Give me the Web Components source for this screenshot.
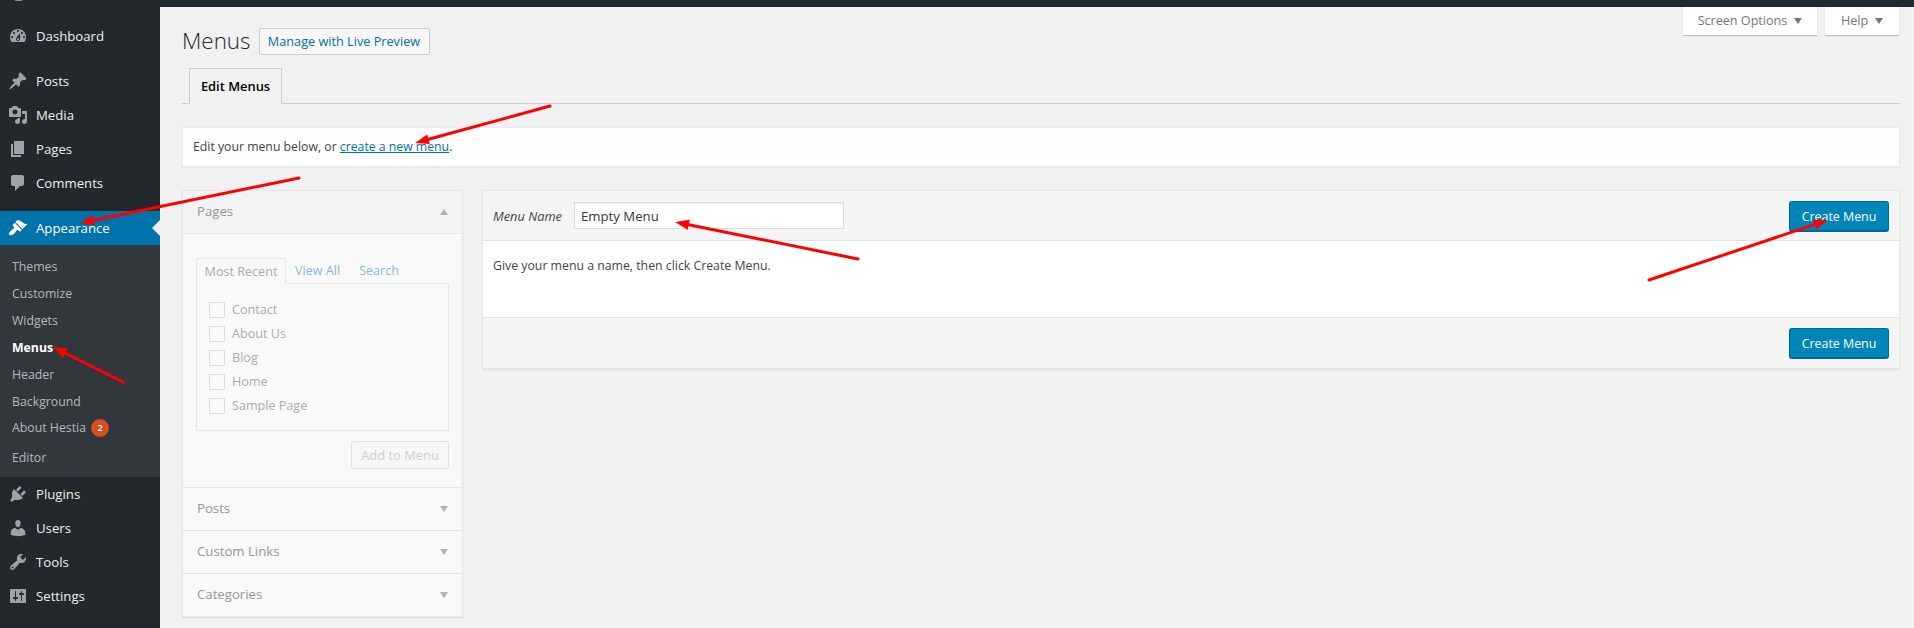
<!DOCTYPE html>
<html lang="en"><head><meta charset="utf-8"><title>Menus</title>
<style>
html,body{margin:0;padding:0;height:628px;overflow:hidden;background:#f1f1f1}
body{font:13px/1.4 "Open Sans","Noto Sans",sans-serif;color:#444;position:relative}
</style></head><body>
<wp-shell>
  <wp-sidebar slot="side">
    <wp-menu-item icon="dashboard" label="Dashboard" style="margin-bottom:11px"></wp-menu-item>
    <wp-menu-item icon="post" label="Posts"></wp-menu-item>
    <wp-menu-item icon="media" label="Media"></wp-menu-item>
    <wp-menu-item icon="page" label="Pages"></wp-menu-item>
    <wp-menu-item icon="comments" label="Comments" style="margin-bottom:11px"></wp-menu-item>
    <wp-menu-item icon="appearance" label="Appearance" current></wp-menu-item>
    <wp-submenu>
      <wp-sub-item>Themes</wp-sub-item>
      <wp-sub-item>Customize</wp-sub-item>
      <wp-sub-item>Widgets</wp-sub-item>
      <wp-sub-item current>Menus</wp-sub-item>
      <wp-sub-item>Header</wp-sub-item>
      <wp-sub-item>Background</wp-sub-item>
      <wp-sub-item tall badge="2">About Hestia</wp-sub-item>
      <wp-sub-item>Editor</wp-sub-item>
    </wp-submenu>
    <wp-menu-item icon="plugin" label="Plugins"></wp-menu-item>
    <wp-menu-item icon="users" label="Users"></wp-menu-item>
    <wp-menu-item icon="tools" label="Tools"></wp-menu-item>
    <wp-menu-item icon="settings" label="Settings"></wp-menu-item>
  </wp-sidebar>
  <wp-content slot="main">
    <wp-screen-tabs></wp-screen-tabs>
    <wp-heading></wp-heading>
    <wp-notice></wp-notice>
    <wp-columns>
      <wp-metaboxes slot="left">
        <wp-accordion title="Pages" open>
          <wp-pages-panel></wp-pages-panel>
        </wp-accordion>
        <wp-accordion title="Posts"></wp-accordion>
        <wp-accordion title="Custom Links"></wp-accordion>
        <wp-accordion title="Categories"></wp-accordion>
      </wp-metaboxes>
      <wp-menu-editor slot="right"></wp-menu-editor>
    </wp-columns>
  </wp-content>
  <wp-arrows slot="over"></wp-arrows>
</wp-shell>
<script>
const ICONS={
dashboard:"M3.76 16h12.48c1.1-1.37 1.76-3.11 1.76-5 0-4.42-3.58-8-8-8s-8 3.58-8 8c0 1.89.66 3.63 1.76 5zM10 4c.55 0 1 .45 1 1s-.45 1-1 1-1-.45-1-1 .45-1 1-1zM6 6c.55 0 1 .45 1 1s-.45 1-1 1-1-.45-1-1 .45-1 1-1zm8 0c.55 0 1 .45 1 1s-.45 1-1 1-1-.45-1-1 .45-1 1-1zm-5.37 5.55L12 7v6c0 1.1-.9 2-2 2s-2-.9-2-2c0-.57.24-1.08.63-1.45zM4 10c.55 0 1 .45 1 1s-.45 1-1 1-1-.45-1-1 .45-1 1-1zm12 0c.55 0 1 .45 1 1s-.45 1-1 1-1-.45-1-1 .45-1 1-1zm-5 3c0-.55-.45-1-1-1s-1 .45-1 1 .45 1 1 1 1-.45 1-1z",
post:"M10.44 3.02l1.82-1.82 6.36 6.35-1.83 1.82c-1.05-.68-2.48-.57-3.41.36l-.75.75c-.92.93-1.04 2.35-.35 3.41l-1.83 1.82-2.41-2.41-2.8 2.79c-.42.42-3.38 2.71-3.8 2.29s1.86-3.39 2.28-3.81l2.79-2.79L4.1 9.36l1.83-1.82c1.05.69 2.48.57 3.4-.36l.75-.75c.93-.92 1.05-2.35.36-3.41z",
media:"M13 11V4c0-.55-.45-1-1-1h-1.67L9 1H5L3.67 3H2c-.55 0-1 .45-1 1v7c0 .55.45 1 1 1h10c.55 0 1-.45 1-1zM7 4.5c1.38 0 2.5 1.12 2.5 2.5S8.38 9.5 7 9.5 4.5 8.38 4.5 7 5.62 4.5 7 4.5zM14 6h5v10.5c0 1.38-1.12 2.5-2.5 2.5S14 17.88 14 16.5s1.12-2.5 2.5-2.5c.17 0 .34.02.5.05V9h-3V6zm-4 8.05V13h2v3.5c0 1.38-1.12 2.5-2.5 2.5S7 17.88 7 16.5 8.12 14 9.5 14c.17 0 .34.02.5.05z",
page:"M6 15V2h10v13H6zm-1 1h8v2H3V5h2v11z",
comments:"M5 2h9c1.1 0 2 .9 2 2v7c0 1.1-.9 2-2 2h-2l-5 5v-5H5c-1.1 0-2-.9-2-2V4c0-1.1.9-2 2-2z",
appearance:"M14.48 11.06L7.41 3.99l1.5-1.5c.5-.56 2.3-.47 3.51.32 1.21.8 1.43 1.28 2.91 2.1 1.18.64 2.45 1.26 4.45.85zm-.71.71L6.7 4.7 4.93 6.47c-.39.39-.39 1.02 0 1.41l1.06 1.06c.39.39.39 1.03 0 1.42-.6.6-1.43 1.11-2.21 1.69-.35.26-.7.53-1.01.84C1.43 13.23.26 15.88 1.28 16.9c1.01 1.01 3.68-.16 5.03-1.51.31-.31.58-.66.84-1.01.58-.78 1.09-1.61 1.69-2.21.39-.39 1.02-.39 1.41 0l1.06 1.06c.39.39 1.02.39 1.41 0z",
plugin:"M13.11 4.36L9.87 7.6 8 5.73l3.24-3.24c.35-.34 1.05-.2 1.56.32.52.51.66 1.21.31 1.55zm-8 1.77l.91-1.12 9.01 9.01-1.19.84c-.71.71-2.63 1.16-3.82 1.16H6.14L4.9 17.26c-.59.59-1.54.59-2.12 0-.59-.58-.59-1.53 0-2.12l1.24-1.24v-3.88c0-1.13.4-3.19 1.09-3.89zm7.26 3.97l3.24-3.24c.34-.35 1.04-.21 1.55.31.52.51.66 1.21.31 1.55l-3.24 3.25z",
users:"M10 9.25c-2.27 0-2.73-3.44-2.73-3.44C7 4.02 7.82 2 9.97 2c2.16 0 2.98 2.02 2.71 3.81 0 0-.41 3.44-2.68 3.44zm0 2.57L12.72 10c2.39 0 4.52 2.33 4.52 4.53v2.49s-3.65 1.13-7.24 1.13c-3.65 0-7.24-1.13-7.24-1.13v-2.49c0-2.25 1.94-4.48 4.47-4.48z",
tools:"M16.68 9.77c-1.34 1.34-3.3 1.67-4.95.99l-5.41 6.52c-.99.99-2.59.99-3.58 0s-.99-2.59 0-3.57l6.52-5.42c-.68-1.65-.35-3.61.99-4.95 1.28-1.28 3.12-1.62 4.72-1.06l-2.89 2.89 2.82 2.82 2.86-2.87c.53 1.58.18 3.39-1.08 4.65zM3.81 16.21c.4.39 1.04.39 1.43 0 .4-.4.4-1.04 0-1.43-.39-.4-1.03-.4-1.43 0-.39.39-.39 1.03 0 1.43z",
settings:"M18 16V4c0-.55-.45-1-1-1H3c-.55 0-1 .45-1 1v12c0 .55.45 1 1 1h14c.55 0 1-.45 1-1zM8 11h1c.55 0 1 .45 1 1s-.45 1-1 1H8v1.5c0 .28-.22.5-.5.5s-.5-.22-.5-.5V13H6c-.55 0-1-.45-1-1s.45-1 1-1h1V5.5c0-.28.22-.5.5-.5s.5.22.5.5V11zm5-2h-1c-.55 0-1-.45-1-1s.45-1 1-1h1V5.5c0-.28.22-.5.5-.5s.5.22.5.5V7h1c.55 0 1 .45 1 1s-.45 1-1 1h-1v5.5c0 .28-.22.5-.5.5s-.5-.22-.5-.5V9z"
};
const FONT='"Open Sans","Noto Sans",sans-serif';
function def(name,html){
  customElements.define(name,class extends HTMLElement{
    constructor(){super();this.attachShadow({mode:"open"});}
    connectedCallback(){ this.shadowRoot.innerHTML=typeof html==="function"?html(this):html; }
  });
}
def("wp-shell",`<style>
:host{display:flex;flex-direction:column;width:1914px;height:628px;overflow:hidden;position:relative}
.bar{height:7px;flex:none;background:#23282d;position:relative}
.bar svg{display:block;position:absolute;left:14px;top:0}
.row{display:flex;flex:1;min-height:0}
</style>
<div class="bar"><svg width="10" height="2"><path d="M0 0h9L7 1H2z" fill="#8f9397"/></svg></div>
<div class="row"><slot name="side"></slot><slot name="main"></slot></div>
<slot name="over"></slot>`);
def("wp-sidebar",`<style>
:host{display:block;width:160px;flex:none;background:#23282d;padding-top:12px;box-sizing:border-box}
</style><slot></slot>`);
def("wp-menu-item",el=>{
  const cur=el.hasAttribute("current");
  return `<style>
  :host{display:flex;align-items:center;height:34px;position:relative;font:500 13.2px/18px ${FONT};color:#eee;background:${cur?"#0073aa":"transparent"}}
  svg{width:20px;height:20px;margin:0 8px;flex:none;fill:${cur?"#fff":"#9ea3a8"}}
  span{color:${cur?"#fff":"#eee"}}
  i{position:absolute;right:0;top:9px;border:8px solid transparent;border-right-color:#f1f1f1;border-left:0}
  </style><svg viewBox="0 0 20 20"><path d="${ICONS[el.getAttribute("icon")]}"/></svg><span>${el.getAttribute("label")}</span>${cur?"<i></i>":""}`;
});
def("wp-submenu",`<style>:host{display:block;background:#32373c;padding:8px 0 6px}</style><slot></slot>`);
def("wp-sub-item",el=>{
  const cur=el.hasAttribute("current"),tall=el.hasAttribute("tall"),b=el.getAttribute("badge");
  return `<style>
  :host{display:flex;align-items:center;height:${tall?"29px":"27px"};box-sizing:border-box;padding:${tall?"0 0 3px 12px":"0 0 0 12px"};font:${cur?"700":"400"} 12.3px/18px ${FONT};color:${cur?"#fff":"#b4b9be"}}
  b{display:inline-flex;align-items:center;justify-content:center;width:18px;height:18px;border-radius:50%;background:#d54e21;color:#fff;font:600 9px/18px ${FONT};margin-left:5px}
  </style><slot></slot>${b?`<b>${b}</b>`:""}`;
});
def("wp-content",`<style>:host{display:block;flex:1;min-width:0;padding:0 14px 0 22px;position:relative}</style><slot></slot>`);
def("wp-screen-tabs",`<style>
:host{position:absolute;right:15px;top:0;display:flex;gap:8px;font:400 12.6px/18px ${FONT};color:#72777c}
div{height:28px;box-sizing:border-box;background:#fff;box-shadow:0 1px 1px rgba(0,0,0,.2);display:flex;align-items:center;justify-content:center;gap:7px}
i{width:0;height:0;border:4px solid transparent;border-top:6px solid #72777c;border-bottom:0}
.a{width:134px}.b{width:74px}
</style><div class="a">Screen Options <i></i></div><div class="b">Help <i></i></div>`);
def("wp-heading",`<style>
:host{display:block}
.t{display:flex;align-items:center;height:28px;padding-top:20px}
h1{margin:0;font:300 22.4px/28px ${FONT};color:#23282d}
a{margin-left:8px;width:171px;height:27px;box-sizing:border-box;border:1px solid #ccc;border-radius:2px;background:#f7f7f7;color:#0071a1;font:500 12.7px/25px ${FONT};text-align:center;display:block;white-space:nowrap}
nav{display:flex;margin-top:13px;padding-left:7px;border-bottom:1px solid #ccc;height:35px}
nav span{width:93px;height:36px;box-sizing:border-box;border:1px solid #ccc;border-bottom-color:#f1f1f1;background:#f1f1f1;color:#000;font:600 12.9px/35px ${FONT};text-align:center}
</style><div class="t"><h1>Menus</h1><a>Manage with Live Preview</a></div><nav><span>Edit Menus</span></nav>`);
def("wp-notice",`<style>
:host{display:block;margin-top:23px;height:40px;box-sizing:border-box;background:#fdfdfd;border:1px solid #ebebeb;box-shadow:0 1px 1px rgba(0,0,0,.04);padding:0 10px;font:400 12.25px/38px ${FONT};color:#444}
a{color:#0073aa;text-decoration:underline}
</style>Edit your menu below, or <a>create a new menu</a>.`);
def("wp-columns",`<style>
:host{display:flex;gap:19px;margin-top:23px;align-items:flex-start}
</style><slot name="left"></slot><slot name="right"></slot>`);
def("wp-metaboxes",`<style>
:host{display:block;width:281px;flex:none;box-sizing:border-box;border:1px solid #e6e6e6;background:#f9f9f9;box-shadow:0 1px 1px rgba(0,0,0,.08)}
</style><slot></slot>`);
def("wp-accordion",el=>{
  const o=el.hasAttribute("open");
  return `<style>
  :host{display:block;font-family:${FONT}}
  :host(:not(:last-child)){border-bottom:1px solid #e3e3e3}
  .h{height:42px;box-sizing:border-box;display:flex;align-items:center;justify-content:space-between;padding:0 14px;font:500 13.2px/18px ${FONT};color:#92979b;background:${o?"#f3f3f3":"#f9f9f9"};${o?"border-bottom:1px solid #e8e8e8;height:43px;":""}}
  span{position:relative;top:-1px}
  i{width:0;height:0;border:4px solid transparent;${o?"border-top:0;border-bottom:6px solid #b0b3b6":"border-bottom:0;border-top:6px solid #b0b3b6"}}
  </style><div class="h"><span>${el.getAttribute("title")}</span><i></i></div><slot></slot>`;
});
def("wp-pages-panel",`<style>
:host{display:block;padding:24px 13px 18px;height:253px;box-sizing:border-box;font:400 12.6px/18px ${FONT};color:#a9abad}
.tabs{display:flex;height:26px;margin-bottom:-1px;position:relative}
.tabs span{padding:0 9px;line-height:25px;color:#8cb9d2}
.tabs .on{border:1px solid #e6e6e6;border-bottom-color:#f9f9f9;color:#a9abad;box-sizing:border-box;height:26px;width:90px;padding:0;text-align:center}
.list{border:1px solid #e6e6e6;height:148px;box-sizing:border-box;padding:14px 12px 0}
label{display:flex;align-items:center;height:24px;gap:7px}
label i{display:block;width:16px;height:16px;box-sizing:border-box;border:1px solid #dcdcdc;background:#f9f9f9}
.f{display:flex;justify-content:flex-end;margin-top:10px}
.btn{width:98px;height:28px;box-sizing:border-box;border:1px solid #e2e2e2;border-radius:2px;background:#f7f7f7;color:#cfcfcf;font:500 12.9px/26px ${FONT};text-align:center}
</style>
<div class="tabs"><span class="on">Most Recent</span><span>View All</span><span style="padding-left:10px">Search</span></div>
<div class="list">
<label><i></i>Contact</label><label><i></i>About Us</label><label><i></i>Blog</label><label><i></i>Home</label><label><i></i>Sample Page</label>
</div><div class="f"><div class="btn">Add to Menu</div></div>`);
def("wp-primary-btn",`<style>
:host{display:block;width:100px;height:31px;margin-top:1px;box-sizing:border-box;background:#0085ba;border:1px solid #006799;border-bottom-width:2px;border-radius:3px;color:#fff;font:400 12.4px/30px ${FONT};text-align:center}
</style><slot></slot>`);
def("wp-menu-editor",`<style>
:host{display:block;flex:1;min-width:0;border:1px solid #e6e6e6;box-shadow:0 1px 1px rgba(0,0,0,.06);background:#f5f5f5;font:400 12.3px/18px ${FONT};color:#444}
.h{display:flex;align-items:center;height:50px;box-sizing:border-box;padding:0 10px;border-bottom:1px solid #e3e3e3}
em{font-size:12.8px;width:81px}
.inp{width:270px;height:27px;box-sizing:border-box;border:1px solid #ddd;background:#fff;padding:0 6px;font-size:13.2px;line-height:26px;color:#32373c;box-shadow:inset 0 1px 2px rgba(0,0,0,.07)}
wp-primary-btn{margin-left:auto}
.b{height:77px;box-sizing:border-box;background:#fff;border-bottom:1px solid #e3e3e3;padding:16px 10px;color:#444}
.f{display:flex;justify-content:flex-end;align-items:center;height:50px;padding:0 10px}
</style>
<div class="h"><em>Menu Name</em><div class="inp">Empty Menu</div><wp-primary-btn>Create Menu</wp-primary-btn></div>
<div class="b">Give your menu a name, then click Create Menu.</div>
<div class="f"><wp-primary-btn>Create Menu</wp-primary-btn></div>`);
def("wp-arrows",()=>{
  const A=[[299,178,80,223],[550,106,415,143],[858,259,675,222],[1649,280,1828,220],[123,382,53,347]];
  const p=A.map(([x1,y1,x2,y2])=>{
    const d=Math.hypot(x2-x1,y2-y1),ux=(x2-x1)/d,uy=(y2-y1)/d,nx=-uy,ny=ux,bx=x2-ux*14,by=y2-uy*14;
    return `<line x1="${x1}" y1="${y1}" x2="${bx}" y2="${by}" stroke="#f00" stroke-width="3" stroke-linecap="round"/><polygon fill="#f00" points="${x2},${y2} ${bx+nx*5},${by+ny*5} ${bx-nx*5},${by-ny*5}"/>`;
  }).join("");
  return `<style>:host{display:block;position:absolute;left:0;top:0;width:1914px;height:628px;pointer-events:none}svg{display:block}</style><svg width="1914" height="628">${p}</svg>`;
});
</script>
</body></html>
